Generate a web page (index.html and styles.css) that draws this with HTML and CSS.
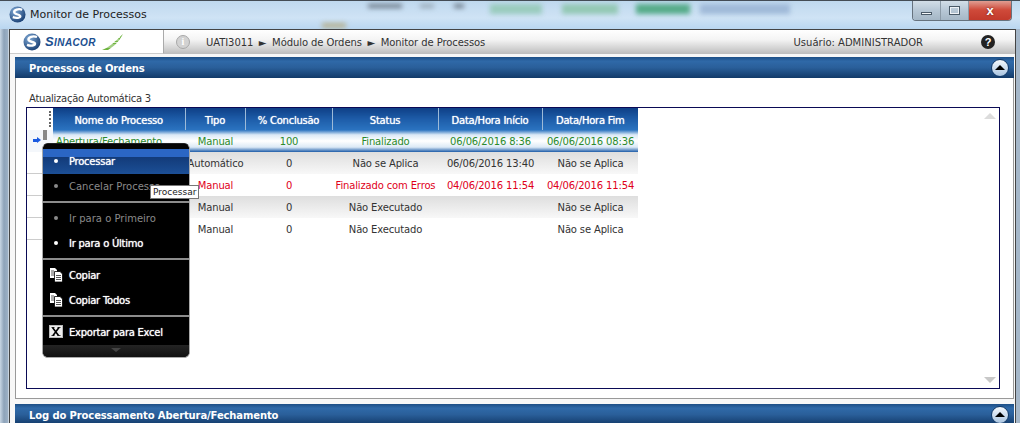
FILE: index.html
```html
<!DOCTYPE html>
<html lang="pt-BR">
<head>
    <meta charset="UTF-8">
    <title>Monitor de Processos</title>
    <link rel="stylesheet" href="styles.css">
</head>
<body>
    <div class="window">
        <!-- Title bar with blurred desktop behind it -->
        <div class="titlebar">
            <span class="blob blob-a"></span>
            <span class="blob blob-b"></span>
            <span class="blob blob-c"></span>
            <span class="blob blob-d"></span>
            <span class="blob blob-e"></span>
            <span class="blob blob-f"></span>
            <span class="blob blob-g"></span>
            <span class="blob blob-h"></span>
            <svg class="app-icon" width="17" height="17" viewBox="0 0 18 18">
                <defs>
                    <radialGradient id="ball" cx="35%" cy="30%" r="80%">
                        <stop offset="0" stop-color="#7fa8d4"/>
                        <stop offset="1" stop-color="#12396e"/>
                    </radialGradient>
                </defs>
                <circle cx="9" cy="9" r="8.5" fill="url(#ball)"/>
                <path d="M14 4C10 2.500 5 4 5.500 6.800c.5 2.700 6.500 1.700 6.500 4 0 1.700-4 2.500-8 1" fill="none" stroke="#fff" stroke-width="2.400"/>
            </svg>
            <span class="title-text">Monitor de Processos</span>
            <div class="win-buttons">
                <span class="win-btn win-min"><i></i></span>
                <span class="win-btn win-max"><i></i></span>
                <span class="win-btn win-close">x</span>
            </div>
        </div>

        <div class="client">
            <!-- App header -->
            <div class="appbar">
                <div class="logo">
                    <svg width="18" height="18" viewBox="0 0 18 18">
                        <circle cx="9" cy="9" r="8.5" fill="url(#ball)"/>
                        <path d="M14 4C10 2.500 5 4 5.500 6.800c.5 2.700 6.500 1.700 6.500 4 0 1.700-4 2.500-8 1" fill="none" stroke="#fff" stroke-width="2.400"/>
                    </svg>
                    <span class="logo-text"><b>S</b>INACOR</span>
                    <svg class="logo-leaf" width="22" height="18" viewBox="0 0 22 18">
                        <path d="M0 17C6 15 14 8 21 1 17 9 11 14 6 17Z" fill="#6fb43f"/>
                        <path d="M3 14h9M5 12h9M7 9.500h9M10 7h7M12 4.500h6" stroke="#fff" stroke-width=".7"/>
                    </svg>
                </div>
                <div class="crumbs">
                    <span class="info-icon">i</span>
                    <span class="path">UATI3011 <small>►</small> Módulo de Ordens <small>►</small> Monitor de Processos</span>
                    <span class="user">Usuário: ADMINISTRADOR</span>
                    <span class="help-icon">?</span>
                </div>
            </div>

            <!-- Processes panel -->
            <div class="panel-head">
                <span>Processos de Ordens</span>
                <span class="collapse"></span>
            </div>
            <div class="panel-body">
                <div class="auto-label">Atualização Automática 3</div>
                <div class="grid-box">
                    <div class="grid-wrap">
                        <div class="gutter">
                            <div class="gutter-head"><span class="grip"></span></div>
                            <div class="gutter-row gutter-sel"><span class="row-arrow"></span><span class="row-mark"></span></div>
                            <div class="gutter-row"></div>
                            <div class="gutter-row"></div>
                            <div class="gutter-row"></div>
                            <div class="gutter-row"></div>
                        </div>
                        <table class="grid">
                            <thead>
                                <tr>
                                    <th class="c-name">Nome do Processo</th>
                                    <th class="c-type">Tipo</th>
                                    <th class="c-pct">% Conclusão</th>
                                    <th class="c-status">Status</th>
                                    <th class="c-start">Data/Hora Início</th>
                                    <th class="c-end">Data/Hora Fim</th>
                                </tr>
                            </thead>
                            <tbody>
                                <tr class="row-sel">
                                    <td class="cell-name">Abertura/Fechamento</td><td>Manual</td><td>100</td><td>Finalizado</td><td>06/06/2016 8:36</td><td>06/06/2016 08:36</td>
                                </tr>
                                <tr class="row-alt">
                                    <td></td><td>Automático</td><td>0</td><td>Não se Aplica</td><td>06/06/2016 13:40</td><td>Não se Aplica</td>
                                </tr>
                                <tr class="row-err">
                                    <td></td><td>Manual</td><td>0</td><td>Finalizado com Erros</td><td>04/06/2016 11:54</td><td>04/06/2016 11:54</td>
                                </tr>
                                <tr class="row-alt">
                                    <td></td><td>Manual</td><td>0</td><td>Não Executado</td><td></td><td>Não se Aplica</td>
                                </tr>
                                <tr>
                                    <td></td><td>Manual</td><td>0</td><td>Não Executado</td><td></td><td>Não se Aplica</td>
                                </tr>
                            </tbody>
                        </table>
                    </div>
                    <span class="scroll-up"></span>
                    <span class="scroll-down"></span>

                    <!-- Context menu -->
                    <div class="menu">
                        <div class="menu-top"></div>
                        <div class="menu-item active"><span class="bullet"></span>Processar</div>
                        <div class="menu-item disabled"><span class="bullet"></span>Cancelar Processo</div>
                        <div class="menu-sep"></div>
                        <div class="menu-item disabled"><span class="bullet"></span>Ir para o Primeiro</div>
                        <div class="menu-item"><span class="bullet"></span>Ir para o Último</div>
                        <div class="menu-sep"></div>
                        <div class="menu-item">
                            <svg class="menu-icon" width="14" height="14" viewBox="0 0 14 14">
                                <path d="M1 0h5l2 2v8H1Z" fill="#fff"/>
                                <path d="M5.500 3.500h5.500l2.500 2.500v8h-8Z" fill="#fff" stroke="#000" stroke-width=".8"/>
                                <path d="M7 7.500h5M7 9.500h5M7 11.500h5M2 3h3M2 5h3M2 7h3" stroke="#444" stroke-width=".9"/>
                            </svg>Copiar
                        </div>
                        <div class="menu-item">
                            <svg class="menu-icon" width="14" height="14" viewBox="0 0 14 14">
                                <path d="M1 0h5l2 2v8H1Z" fill="#fff"/>
                                <path d="M5.500 3.500h5.500l2.500 2.500v8h-8Z" fill="#fff" stroke="#000" stroke-width=".8"/>
                                <path d="M7 7.500h5M7 9.500h5M7 11.500h5M2 3h3M2 5h3M2 7h3" stroke="#444" stroke-width=".9"/>
                            </svg>Copiar Todos
                        </div>
                        <div class="menu-sep"></div>
                        <div class="menu-item">
                            <svg class="menu-icon" width="14" height="13" viewBox="0 0 14 13">
                                <rect x=".5" y=".5" width="13" height="12" fill="#eee" stroke="#bbb"/>
                                <path d="M3.500 2.500l6 8M10 2.500l-6 8" stroke="#000" stroke-width="1.600"/>
                                <path d="M2.500 2.500h3M8.500 2.500h3M2.500 10.500h3M8.500 10.500h3" stroke="#000" stroke-width=".8"/>
                            </svg>Exportar para Excel
                        </div>
                        <div class="menu-bottom"><span class="menu-more"></span></div>
                    </div>
                    <div class="tooltip">Processar</div>
                </div>
            </div>

            <!-- Log panel -->
            <div class="panel-head">
                <span>Log do Processamento Abertura/Fechamento</span>
                <span class="collapse"></span>
            </div>
        </div>
    </div>
</body>
</html>
```

FILE: styles.css
```css
html, body {
    margin: 0;
    padding: 0;
    height: 423px;
    overflow: hidden;
}
body {
    font-family: "DejaVu Sans", "Liberation Sans", sans-serif;
    font-size: 10px;
    color: #333;
}
.window {
    width: 1020px;
    height: 423px;
    box-sizing: border-box;
    padding: 0 4px 0 9px;
    background: linear-gradient(to right, #c8d6e4 0, #8ea3b9 4px, #9db1c6 8px, #f4f6f8 9px, #a5b7c9 1016px);
    overflow: hidden;
}

/* Title bar */
.titlebar {
    position: relative;
    height: 29px;
    display: flex;
    align-items: center;
    gap: 4px;
    margin: 0 -4px 0 -9px;
    padding: 0 8px 2px 9px;
    box-sizing: border-box;
    background: linear-gradient(to bottom, #bfd8ee, #cfe3f5 60%, #b9d6f0);
    border-top: 1px solid #444c55;
    overflow: hidden;
}
.blob {
    position: absolute;
    top: 3px;
    height: 10px;
    filter: blur(2.500px);
}
.blob-a { left: 490px; width: 52px; background: #99cbbd; }
.blob-b { left: 562px; width: 56px; background: #93c8b3; }
.blob-c { left: 636px; width: 54px; background: #55ab88; }
.blob-d { left: 700px; width: 90px; background: #9fb9d8; }
.blob-e { left: 368px; width: 34px; height: 4px; background: #6c7986; }
.blob-f { left: 420px; width: 14px; height: 4px; background: #98a8b6; }
.blob-g { left: 454px; width: 10px; height: 4px; background: #6c7986; }
.blob-h { left: 322px; top: 22px; width: 24px; height: 5px; background: #b5b08f; }
.app-icon, .title-text {
    position: relative;
}
.title-text {
    font-size: 11px;
    color: #222;
}
.win-buttons {
    position: absolute;
    top: -1px;
    right: 8px;
    display: flex;
    height: 20px;
    border: 1px solid #66727e;
    border-top: none;
    border-radius: 0 0 4px 4px;
    overflow: hidden;
}
.win-btn {
    display: flex;
    align-items: center;
    justify-content: center;
    width: 27px;
    background: linear-gradient(to bottom, #d5e0e9, #b8c8d6 50%, #a5b7c6);
    border-right: 1px solid #8b9aa7;
}
.win-close {
    width: 42px;
    border-right: none;
    background: linear-gradient(to bottom, #e2a79c, #cf4a3a 50%, #c23a2c);
    color: #fff;
    font: bold 13px "Liberation Sans", sans-serif;
    text-shadow: 0 0 2px #5c1a12;
}
.win-min i {
    display: block;
    width: 11px;
    height: 3px;
    margin-top: 6px;
    background: #f4f7fa;
    border: 1px solid #4a5a68;
    box-sizing: border-box;
}
.win-max i {
    display: block;
    width: 11px;
    height: 9px;
    border: 1px solid #4a5a68;
    box-shadow: inset 0 0 0 1px #eef2f6;
    box-sizing: border-box;
}

/* Client area */
.client {
    height: 394px;
    border: 1px solid #444;
    border-bottom: none;
    background: #f7f7f7;
    box-sizing: border-box;
    width: 1007px;
}
.appbar {
    display: flex;
    height: 24px;
    background: linear-gradient(to bottom, #fff 0, #f4f4f4 40%, #bdbdbd 100%);
}
.logo {
    width: 140px;
    height: 23px;
    padding-left: 13px;
    display: flex;
    align-items: center;
    gap: 4px;
    background: #fff;
    border-right: 1px solid #aaa;
    border-bottom: 1px solid #ccc;
}
.logo-leaf {
    margin-left: 2px;
}
.logo-text {
    font: italic bold 10px "Liberation Sans", sans-serif;
    color: #1c4f8f;
    letter-spacing: .4px;
}
.logo-text b {
    font-size: 13px;
}
.crumbs {
    flex: 1;
    display: flex;
    align-items: center;
    padding-left: 12px;
    padding-right: 20px;
    color: #333;
}
.info-icon {
    width: 14px;
    height: 14px;
    border-radius: 50%;
    background: #d2d2d2;
    border: 1px solid #a8a8a8;
    box-sizing: border-box;
    color: #fff;
    font: bold 10px/12px "Liberation Serif", serif;
    text-align: center;
    margin-right: 16px;
}
.path {
    letter-spacing: -.08px;
}
.path small {
    font-size: 10px;
    margin: 0 2.500px;
}
.user {
    margin-left: auto;
    margin-right: 58px;
}
.help-icon {
    width: 14px;
    height: 14px;
    border-radius: 50%;
    background: #222;
    color: #fff;
    font: bold 11px/14px "Liberation Sans", sans-serif;
    text-align: center;
}

/* Panels */
.panel-head {
    height: 21px;
    margin: 3px 1px 0 5px;
    padding: 2px 14px 0;
    display: flex;
    align-items: center;
    justify-content: space-between;
    color: #fff;
    font-weight: bold;
    letter-spacing: -.12px;
    background: linear-gradient(to bottom, #1d4f86 0, #2f69a8 20%, #2a5f9a 50%, #123a69 100%);
    box-sizing: border-box;
}
.panel-body + .panel-head {
    margin-top: 5px;
}
.collapse {
    position: relative;
    width: 18px;
    height: 18px;
    margin-top: -2px;
    margin-right: -9px;
    border-radius: 50%;
    background: linear-gradient(to bottom, #f4f8fc, #a9c4e0);
    border: 1px solid #123a69;
    box-sizing: border-box;
}
.collapse::after {
    content: "";
    position: absolute;
    left: 3px;
    top: 5px;
    border: 5px solid transparent;
    border-top: none;
    border-bottom: 5px solid #000;
}
.panel-body {
    height: 321px;
    margin: 0 1px 0 5px;
    padding: 0 10px;
    background: #fff;
    border-left: 1px solid #999;
    border-right: 1px solid #999;
    border-bottom: 1px solid #999;
    box-sizing: border-box;
}
.auto-label {
    height: 29px;
    line-height: 13px;
    padding-top: 14px;
    padding-left: 3px;
    box-sizing: border-box;
    letter-spacing: -.25px;
    color: #333;
}

/* Grid */
.grid-box {
    position: relative;
    width: 974px;
    height: 282px;
    border: 1px solid #0a0a55;
    box-sizing: border-box;
}
.grid-wrap {
    display: flex;
}
.gutter {
    width: 26px;
    flex: none;
}
.gutter-head {
    position: relative;
    height: 22px;
    background: #fff;
}
.grip {
    position: absolute;
    left: 22px;
    top: 3px;
    height: 16px;
    border-left: 2px dotted #666;
}
.gutter-row {
    position: relative;
    height: 22px;
    box-sizing: border-box;
    border-bottom: 1px solid #ccc;
}
.gutter-sel {
    border-bottom: none;
    background: #f4f7fb;
}
.row-arrow {
    position: absolute;
    left: 6px;
    top: 9px;
    width: 5px;
    height: 3px;
    background: #1a5ae0;
}
.row-arrow::after {
    content: "";
    position: absolute;
    left: 4px;
    top: -2px;
    border-left: 4px solid #1a5ae0;
    border-top: 3.500px solid transparent;
    border-bottom: 3.500px solid transparent;
}
.row-mark {
    position: absolute;
    left: 16px;
    top: 0;
    width: 4px;
    height: 10px;
    background: #888;
}
.grid {
    border-collapse: collapse;
    table-layout: fixed;
    width: 585px;
}
.grid th {
    box-sizing: border-box;
    height: 22px;
    padding: 2px 0 0;
    color: #fff;
    font-weight: normal;
    letter-spacing: -.25px;
    text-shadow: 0 0 1px #fff;
    background: linear-gradient(to bottom, #0e3f86 0, #1d5ca8 50%, #2b73c0 100%);
    border-right: 1px solid #9dbad8;
}
.grid th:last-child {
    border-right: none;
}
.c-name { width: 132px; }
.c-type { width: 60px; }
.c-pct { width: 87px; }
.c-status { width: 106px; }
.c-start { width: 104px; }
.c-end { width: 96px; }
.grid td {
    height: 22px;
    padding: 0 0 0 1px;
    text-align: center;
    letter-spacing: -.15px;
    white-space: nowrap;
    overflow: hidden;
}
.grid td.cell-name {
    text-align: left;
    padding-left: 3px;
}
.row-alt td {
    background: linear-gradient(to bottom, #dedede, #f8f8f8);
}
.row-err td {
    color: #e0001a;
}
.row-sel td {
    color: #2b8a2b;
    background: linear-gradient(to bottom, #2b73c0 0, #dbe9f6 22%, #fff 50%, #dbe9f6 78%, #1d5ca8 100%);
}
.scroll-up, .scroll-down {
    position: absolute;
    right: 3px;
    border-left: 6px solid transparent;
    border-right: 6px solid transparent;
}
.scroll-up {
    top: 5px;
    border-bottom: 6px solid #dcdcdc;
}
.scroll-down {
    bottom: 5px;
    border-top: 6px solid #c8c8c8;
}

/* Context menu */
.menu {
    position: absolute;
    left: 15px;
    top: 35px;
    width: 148px;
    box-sizing: border-box;
    border: 1px solid #aaa;
    border-top-color: #222;
    border-radius: 6px;
    background: #000;
    color: #fff;
    overflow: hidden;
}
.menu-top {
    height: 5px;
    background: #050505;
}
.menu-item {
    display: flex;
    align-items: center;
    height: 25px;
    padding-left: 26px;
    position: relative;
    letter-spacing: -.25px;
    text-shadow: 0 0 1px #fff;
    white-space: nowrap;
}
.menu-item.active {
    background: linear-gradient(to bottom, #2b66c4 0, #2b66c4 30%, #123a78 30%, #1c4f96 100%);
}
.menu-item.disabled {
    color: #8a8a8a;
    letter-spacing: 0;
    text-shadow: none;
}
.bullet {
    position: absolute;
    left: 11px;
    top: 10px;
    width: 4px;
    height: 4px;
    border-radius: 50%;
    background: currentColor;
}
.menu-sep {
    height: 2px;
    margin: 2px 0 3px;
    background: #8c8c8c;
}
.menu-icon {
    position: absolute;
    left: 6px;
    top: 5px;
}
.menu-bottom {
    height: 12px;
    background: linear-gradient(to bottom, #242424, #111);
    display: flex;
    justify-content: center;
}
.menu-more {
    margin-top: 3px;
    width: 0;
    height: 0;
    border-left: 5px solid transparent;
    border-right: 5px solid transparent;
    border-top: 4px solid #444;
}
.tooltip {
    position: absolute;
    left: 123px;
    top: 77px;
    height: 12px;
    padding: 0 2px;
    background: #fff;
    border: 1px solid #777;
    font-size: 9px;
    line-height: 12px;
    color: #222;
}
```
